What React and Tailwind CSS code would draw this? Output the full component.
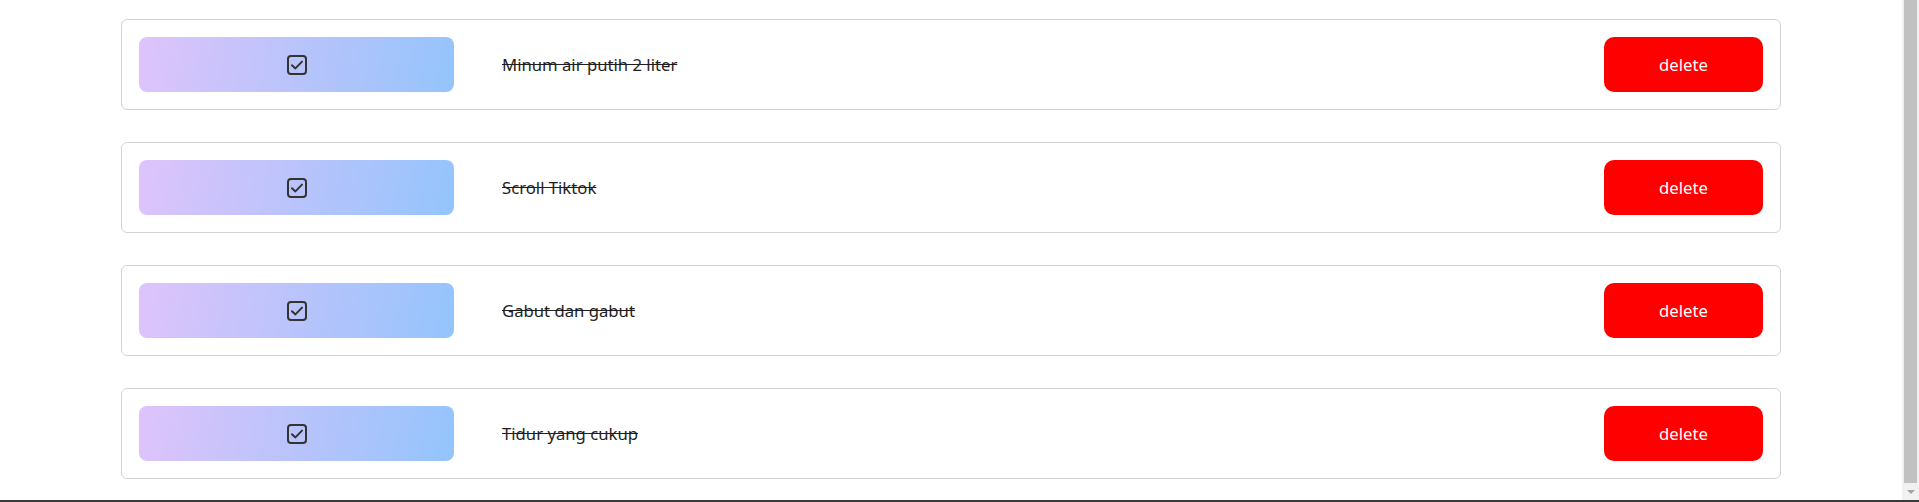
const todos = [
  { id: 1, title: "Minum air putih 2 liter", done: true },
  { id: 2, title: "Scroll Tiktok", done: true },
  { id: 3, title: "Gabut dan gabut", done: true },
  { id: 4, title: "Tidur yang cukup", done: true },
];

const CheckSquare = () => (
  <svg width="20" height="20" viewBox="0 0 20 20" fill="none">
    <rect x="1" y="1" width="18" height="18" rx="3" stroke="#333333" strokeWidth="2" />
    <path
      d="M5 10.2 8.4 13.4 15 6.6"
      stroke="#333333"
      strokeWidth="2"
      strokeLinecap="round"
      strokeLinejoin="round"
    />
  </svg>
);

const TodoItem = ({ todo }) => {
  return (
    <div className="flex items-center h-[91px] px-[17px] border border-[#d3d3d3] rounded-md bg-white">
      <button className="flex items-center justify-center w-[315px] h-[55px] rounded-lg bg-[linear-gradient(100deg,#dfc3fb,#94c4fc)] shrink-0">
        <CheckSquare />
      </button>
      <p
        className={`ml-12 flex-1 text-[16.7px] text-[#1f1f1f] ${
          todo.done ? "line-through" : ""
        }`}
      >
        {todo.title}
      </p>
      <button className="w-[159px] h-[55px] rounded-[10px] bg-[#ff0000] text-white text-[16.7px] shrink-0">
        delete
      </button>
    </div>
  );
};

export default function App() {
  return (
    <div className="h-[502px] flex flex-col bg-white font-['Noto_Sans',sans-serif] overflow-hidden">
      <div className="flex-1 flex min-h-0">
        {/* Todo list */}
        <div className="flex-1 pt-[19px]">
          <div className="w-[1660px] mx-auto flex flex-col gap-[32px]">
            {todos.map((todo) => (
              <TodoItem key={todo.id} todo={todo} />
            ))}
          </div>
        </div>

        {/* Fake scrollbar */}
        <div className="w-[17px] bg-[#f1f1f1] flex flex-col">
          <div className="flex-1 mx-[2px] bg-[#c1c1c1]" />
          <div className="h-[17px] flex items-center justify-center">
            <div className="w-0 h-0 border-l-[4px] border-r-[4px] border-t-[4px] border-l-transparent border-r-transparent border-t-[#a3a3a3]" />
          </div>
        </div>
      </div>
      <div className="h-[2px] bg-[#3a3a3a]" />
    </div>
  );
}
